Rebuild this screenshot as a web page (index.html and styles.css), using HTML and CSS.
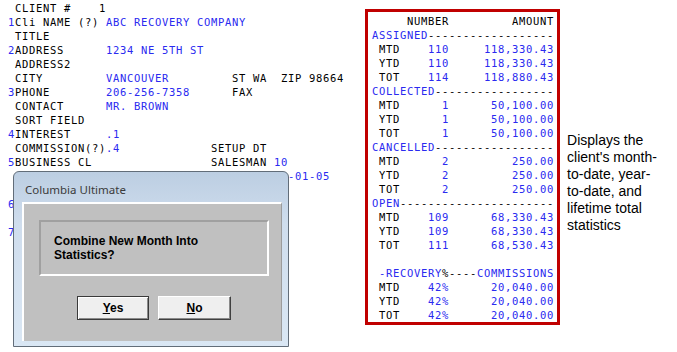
FILE: index.html
```html
<!DOCTYPE html>
<html lang="en">

<head>
  <meta charset="UTF-8">
  <meta name="viewport" content="width=device-width, initial-scale=1.0">
  <title>Client statistics</title>
  <link rel="stylesheet" href="styles.css">
</head>

<body>
  <div class="page">
    <!-- экран клиента -->
    <div class="screen">
<pre class="term"> CLIENT #    1
<span class="val">1</span>Cli NAME (?) <span class="val">ABC RECOVERY COMPANY</span>
 TITLE
<span class="val">2</span>ADDRESS      <span class="val">1234 NE 5TH ST</span>
 ADDRESS2
 CITY         <span class="val">VANCOUVER</span>         ST WA  ZIP 98664
<span class="val">3</span>PHONE        <span class="val">206-256-7358</span>      FAX
 CONTACT      <span class="val">MR. BROWN</span>
 SORT FIELD
<span class="val">4</span>INTEREST     <span class="val">.1</span>
 COMMISSION(?)<span class="val">.4</span>             SETUP DT
<span class="val">5</span>BUSINESS CL                 SALESMAN <span class="val">10</span>
                             CHG DT <span class="val">2010-01-05</span>

<span class="val">6</span>COLLECTOR

<span class="val">7</span>STATUS</pre>

      <!-- диалог -->
      <div class="dialog">
        <div class="dialog__title">Columbia Ultimate</div>
        <div class="dialog__body">
          <div class="dialog__message">Combine New Month Into<br>Statistics?</div>
          <div class="dialog__buttons">
            <button class="btn btn_default"><u>Y</u>es</button>
            <button class="btn"><u>N</u>o</button>
          </div>
        </div>
      </div>
    </div>

    <div class="stats">
<pre class="term">     NUMBER         AMOUNT
<span class="val">ASSIGNED</span>------------------
 MTD    <span class="val">110</span>     <span class="val">118,330.43</span>
 YTD    <span class="val">110</span>     <span class="val">118,330.43</span>
 TOT    <span class="val">114</span>     <span class="val">118,880.43</span>
<span class="val">COLLECTED</span>-----------------
 MTD      <span class="val">1</span>      <span class="val">50,100.00</span>
 YTD      <span class="val">1</span>      <span class="val">50,100.00</span>
 TOT      <span class="val">1</span>      <span class="val">50,100.00</span>
<span class="val">CANCELLED</span>-----------------
 MTD      <span class="val">2</span>         <span class="val">250.00</span>
 YTD      <span class="val">2</span>         <span class="val">250.00</span>
 TOT      <span class="val">2</span>         <span class="val">250.00</span>
<span class="val">OPEN</span>----------------------
 MTD    <span class="val">109</span>      <span class="val">68,330.43</span>
 YTD    <span class="val">109</span>      <span class="val">68,330.43</span>
 TOT    <span class="val">111</span>      <span class="val">68,530.43</span>

 <span class="val">-RECOVERY</span>%----<span class="val">COMMISSIONS</span>
 MTD    <span class="val">42%</span>      <span class="val">20,040.00</span>
 YTD    <span class="val">42%</span>      <span class="val">20,040.00</span>
 TOT    <span class="val">42%</span>      <span class="val">20,040.00</span></pre>
    </div>

    <p class="note">Displays the client's month-to-date, year-to-date, and lifetime total statistics</p>
  </div>
</body>

</html>
```

FILE: styles.css
```css
body {
  margin: 0;
  background-color: #fff;
  color: #000
}

.page {
  display: flex;
  align-items: flex-start
}

.term {
  margin: 0;
  font-family: "DejaVu Sans Mono", monospace;
  font-size: 10.5px;
  letter-spacing: .68px;
  line-height: 14px;
  color: #000
}

.val {
  color: #2a2af0
}

/* экран слева */
.screen {
  position: relative;
  width: 365px;
  height: 352px;
  padding: 1px 0 0 8px;
  box-sizing: border-box
}

/* окно диалога поверх экрана */
.dialog {
  position: absolute;
  top: 171px;
  left: 13px;
  width: 276px;
  height: 176px;
  box-sizing: border-box;
  display: flex;
  flex-direction: column;
  padding: 0 6px 5px 8px;
  border: 1px solid #626d79;
  border-radius: 6px 6px 0 0;
  background: linear-gradient(#bccee2, #cfdded 30%, #dae7f4 100%)
}

.dialog__title {
  height: 30px;
  box-sizing: border-box;
  padding: 9px 0 0 3px;
  font-family: "Noto Sans", sans-serif;
  font-size: 11.5px;
  line-height: 18px;
  color: #3b3b3b
}

.dialog__body {
  flex: 1;
  background-color: #c0c0c0;
  border-top: 2px solid #fff;
  border-left: 2px solid #fff;
  border-right: 1px solid #9c9c9c
}

.dialog__message {
  height: 56px;
  box-sizing: border-box;
  margin: 16px 12px 0 15px;
  padding: 13px 0 0 13px;
  border: 2px solid;
  border-color: #a0a0a0 #fff #fff #a0a0a0;
  font-family: "Liberation Sans", Arial, sans-serif;
  font-size: 12px;
  font-weight: 700;
  line-height: 13.5px
}

.dialog__buttons {
  display: flex;
  gap: 9px;
  margin-top: 20px;
  padding-left: 53px
}

.btn {
  width: 73px;
  height: 24px;
  padding: 0;
  border: 1px solid;
  border-color: #fff #404040 #404040 #fff;
  box-shadow: inset -1px -1px #8a8a8a;
  background-color: #efefef;
  font-family: "Liberation Sans", Arial, sans-serif;
  font-size: 12px;
  font-weight: 700;
  color: #000
}

.btn_default {
  width: 72px;
  border-color: #3a3a3a;
  box-shadow: inset 1px 1px #fff, inset -1px -1px #8a8a8a
}

/* блок статистики */
.stats {
  margin-top: 9px;
  padding: 2px 3px 0 4px;
  border: 3px solid #c00000
}

.note {
  width: 96px;
  margin: 132px 0 0 7px;
  font-family: "Liberation Sans", Arial, sans-serif;
  font-size: 14px;
  line-height: 17px
}
```
